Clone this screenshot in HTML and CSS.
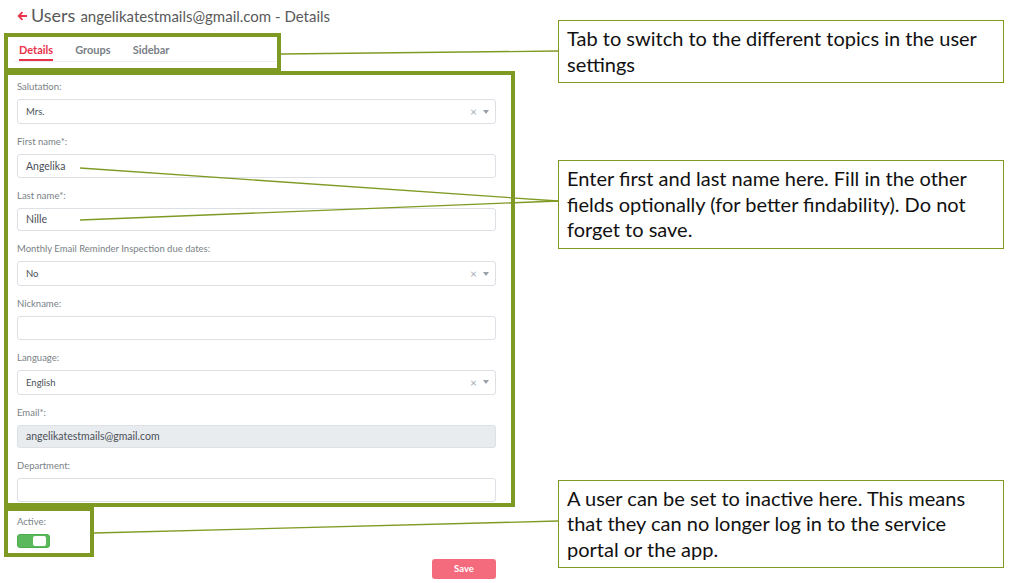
FILE: index.html
```html
<!DOCTYPE html>
<html lang="en">
<head>
    <meta charset="UTF-8">
    <meta name="viewport" content="width=device-width, initial-scale=1.0">
    <title>Users - Details</title>
    <link rel="stylesheet" href="styles.css">
</head>
<body>
    <div class="page">
        <div class="app">
            <h1 class="page-title">
                <svg class="back-arrow" width="11" height="10" viewBox="0 0 11 10">
                    <path d="M10 5H2M5.5 1.2L1.7 5l3.8 3.8" />
                </svg>
                <span class="title-main">Users</span>
                <span class="title-sub">angelikatestmails@gmail.com - Details</span>
            </h1>

            <div class="mark tab-box">
                <nav class="tabs">
                    <span class="tab active">Details</span>
                    <span class="tab">Groups</span>
                    <span class="tab">Sidebar</span>
                </nav>
            </div>

            <div class="mark form-box">
                <div class="form-group">
                    <label>Salutation:</label>
                    <div class="select"><span>Mrs.</span><span class="select-icons"><span class="clear">&#215;</span><span class="caret"></span></span></div>
                </div>
                <div class="form-group">
                    <label>First name*:</label>
                    <div class="input">Angelika</div>
                </div>
                <div class="form-group">
                    <label>Last name*:</label>
                    <div class="input">Nille</div>
                </div>
                <div class="form-group">
                    <label>Monthly Email Reminder Inspection due dates:</label>
                    <div class="select"><span>No</span><span class="select-icons"><span class="clear">&#215;</span><span class="caret"></span></span></div>
                </div>
                <div class="form-group">
                    <label>Nickname:</label>
                    <div class="input"></div>
                </div>
                <div class="form-group">
                    <label>Language:</label>
                    <div class="select"><span>English</span><span class="select-icons"><span class="clear">&#215;</span><span class="caret"></span></span></div>
                </div>
                <div class="form-group">
                    <label>Email*:</label>
                    <div class="input disabled">angelikatestmails@gmail.com</div>
                </div>
                <div class="form-group last">
                    <label>Department:</label>
                    <div class="input"></div>
                </div>
            </div>

            <div class="mark active-box">
                <label>Active:</label>
                <div class="toggle"><span class="knob"></span></div>
            </div>

            <div class="actions">
                <button class="save-btn">Save</button>
            </div>
        </div>

        <div class="notes">
            <div class="note note-tabs">Tab to switch to the different topics in the user settings</div>
            <div class="note note-names">Enter first and last name here. Fill in the other fields optionally (for better findability). Do not forget to save.</div>
            <div class="note note-active">A user can be set to inactive here. This means that they can no longer log in to the service portal or the app.</div>
        </div>
    </div>

    <!-- connector lines between marked areas and notes -->
    <svg class="connectors" width="1031" height="583" viewBox="0 0 1031 583">
        <line x1="281" y1="54" x2="558" y2="51" />
        <line x1="80" y1="168" x2="558" y2="201" />
        <line x1="80" y1="220" x2="558" y2="201" />
        <line x1="94" y1="533" x2="558" y2="521" />
    </svg>
</body>
</html>
```

FILE: styles.css
```css
* {
    margin: 0;
    padding: 0;
    box-sizing: border-box;
}

body {
    font-family: Lato, 'Noto Sans', sans-serif;
    background: #ffffff;
    width: 1031px;
    height: 583px;
    overflow: hidden;
    position: relative;
}

.page {
    display: flex;
    align-items: flex-start;
}

.app {
    width: 515px;
    padding-left: 4px;
    display: flex;
    flex-direction: column;
}

/* Header */
.page-title {
    display: flex;
    align-items: center;
    height: 33px;
    padding: 0 0 4px 13px;
    font-weight: 400;
    color: #5a5a5a;
}

.back-arrow {
    margin-right: 3px;
    margin-top: 2px;
}

.back-arrow path {
    fill: none;
    stroke: #e8334a;
    stroke-width: 1.8;
}

.title-main {
    font-size: 18px;
    margin-right: 5px;
}

.title-sub {
    font-size: 15px;
    margin-top: 2px;
}

/* Green annotation frames */
.mark {
    border: 4px solid #7f9a22;
    background: #ffffff;
}

.tab-box {
    width: 277px;
    height: 39px;
    padding: 0 0 0 7px;
}

.tabs {
    display: flex;
    gap: 22px;
    height: 25px;
    border-bottom: 1px solid #eceef1;
    padding-left: 4px;
}

.tab {
    font-size: 11px;
    font-weight: 700;
    color: #7b7f86;
    line-height: 15px;
    padding-top: 5px;
    border-bottom: 2px solid transparent;
}

.tab.active {
    color: #e8334a;
    border-bottom-color: #e8334a;
}

.form-box {
    width: 511px;
    margin-top: -1px;
    padding: 5px 15px 1px 9px;
}

.form-group {
    margin-bottom: 11px;
}

.form-group.last {
    margin-bottom: 0;
}

label {
    display: block;
    font-size: 9.5px;
    line-height: 14px;
    color: #7a7f86;
    margin-bottom: 5px;
}

.input,
.select {
    height: 23.5px;
    border: 1px solid #dcdfe4;
    border-radius: 3px;
    font-size: 10.5px;
    color: #4b5058;
    padding: 0 8px;
    display: flex;
    align-items: center;
}

.select {
    height: 25px;
    justify-content: space-between;
    font-size: 9.5px;
    padding-right: 6px;
}

.input.disabled {
    background: #e9ecef;
    border-color: #dde0e4;
}

.select-icons {
    display: flex;
    align-items: center;
    gap: 6px;
    color: #a9aeb5;
}

.clear {
    font-size: 12px;
}

.caret {
    width: 0;
    height: 0;
    border-left: 3.5px solid transparent;
    border-right: 3.5px solid transparent;
    border-top: 4px solid #9aa0a7;
}

.active-box {
    width: 90px;
    height: 50px;
    padding: 4px 0 0 9px;
}

.active-box label {
    margin-bottom: 5px;
}

.toggle {
    width: 33px;
    height: 14px;
    border-radius: 3px;
    background: #5cb85c;
    border: 1px solid #4cae4c;
    display: flex;
    justify-content: flex-end;
    padding: 1px 3px 1px 0;
}

.knob {
    width: 13px;
    height: 10px;
    background: #ffffff;
    border-radius: 2px;
}

.actions {
    display: flex;
    justify-content: flex-end;
    padding-right: 19px;
    margin-top: 2px;
}

.save-btn {
    width: 64px;
    height: 20px;
    border: none;
    border-radius: 3px;
    background: #f36b7d;
    color: #ffffff;
    font-family: Lato, 'Noto Sans', sans-serif;
    font-size: 9.5px;
    font-weight: 700;
}

/* Callout notes */
.notes {
    margin-left: 43px;
    display: flex;
    flex-direction: column;
}

.note {
    width: 446px;
    border: 1.5px solid #7f9a22;
    padding: 5px 8px 5px 8px;
    font-family: Lato, 'Liberation Sans', sans-serif;
    font-size: 20px;
    line-height: 25.5px;
    color: #111111;
}

.note-tabs {
    margin-top: 20px;
}

.note-names {
    margin-top: 77px;
}

.note-active {
    margin-top: 231px;
}

.connectors {
    position: absolute;
    top: 0;
    left: 0;
    pointer-events: none;
}

.connectors line {
    stroke: #7f9a22;
    stroke-width: 1.3;
}
```
